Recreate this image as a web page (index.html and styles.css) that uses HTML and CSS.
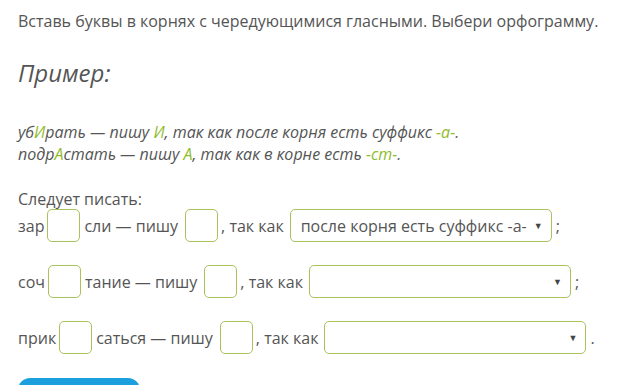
FILE: index.html
```html
<!DOCTYPE html>
<html lang="ru">
<head>
    <meta charset="UTF-8">
    <title>Задание</title>
    <link rel="stylesheet" href="styles.css">
</head>
<body>
    <div class="task">
        <p class="task-text">Вставь буквы в корнях с чередующимися гласными. Выбери орфограмму.</p>

        <h2 class="example-title">Пример:</h2>

        <div class="example">
            <p>уб<span class="hl">И</span>рать — пишу <span class="hl">И</span>, так как после корня есть суффикс <span class="hl">-а-</span>.</p>
            <p>подр<span class="hl">А</span>стать — пишу <span class="hl">А</span>, так как в корне есть <span class="hl">-ст-</span>.</p>
        </div>

        <p class="lead">Следует писать:</p>

        <div class="row">
            <span>зар</span><span class="box tight"></span><span>сли — пишу</span><span class="box"></span><span>, так как</span>
            <span class="select"><span class="select-text">после корня есть суффикс -а-</span><span class="arrow">▼</span></span><span>;</span>
        </div>

        <div class="row">
            <span>соч</span><span class="box tight"></span><span>тание — пишу</span><span class="box"></span><span>, так как</span>
            <span class="select"><span class="select-text"></span><span class="arrow">▼</span></span><span>;</span>
        </div>

        <div class="row">
            <span>прик</span><span class="box tight"></span><span>саться — пишу</span><span class="box"></span><span>, так как</span>
            <span class="select"><span class="select-text"></span><span class="arrow">▼</span></span><span>.</span>
        </div>

        <button class="check-btn"></button>
    </div>
</body>
</html>
```

FILE: styles.css
```css
* {
    margin: 0;
    padding: 0;
    box-sizing: border-box;
}

body {
    font-family: 'Open Sans', 'Noto Sans', sans-serif;
    color: #555;
    background: #fff;
    overflow: hidden;
}

.task {
    padding: 10px 18px 0 18px;
}

.task-text {
    font-size: 16px;
    line-height: 22px;
}

.example-title {
    font-size: 24px;
    font-style: italic;
    font-weight: normal;
    margin-top: 25px;
    line-height: 32px;
}

.example {
    margin-top: 32px;
    font-style: italic;
    font-size: 16px;
    line-height: 22px;
}

.hl {
    color: #8fbc2b;
}

.lead {
    margin-top: 24px;
    font-size: 16px;
    line-height: 20px;
}

.row {
    display: flex;
    align-items: center;
    font-size: 16px;
    height: 33px;
    margin-bottom: 23px;
}

.row:first-of-type {
    margin-top: 1px;
}

.box {
    display: inline-block;
    width: 33px;
    height: 33px;
    border: 1px solid #a9c25b;
    border-radius: 5px;
    margin: 0 3px 0 7px;
}

.box.tight {
    margin: 0 4px 0 3px;
}

.select {
    display: flex;
    align-items: center;
    justify-content: space-between;
    width: 262px;
    height: 33px;
    border: 1px solid #a9c25b;
    border-radius: 5px;
    padding: 0 8px 0 10px;
    margin: 0 4px 0 6px;
}

.arrow {
    font-size: 9px;
    color: #444;
}

.check-btn {
    margin-top: 1px;
    width: 122px;
    height: 40px;
    border: none;
    border-radius: 12px;
    background: #1ba0dd;
}
```
